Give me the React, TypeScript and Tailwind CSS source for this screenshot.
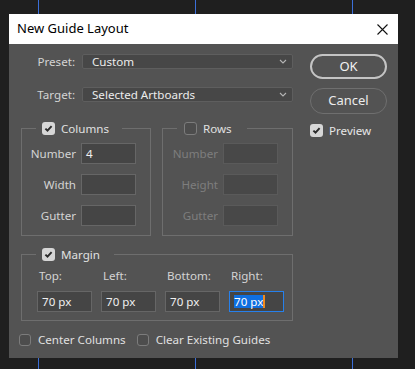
import React from "react"

const font = "font-['Noto_Sans','Open_Sans',sans-serif]"

function Check({ checked = false, small = false }: { checked?: boolean; small?: boolean }) {
  return (
    <span
      className={`flex items-center justify-center rounded-[3px] shrink-0 ${
        small ? "w-[12px] h-[12px]" : "w-[13px] h-[13px]"
      } ${checked ? "bg-[#d6d6d6]" : "border-[1.5px] border-[#7c7c7c] bg-[#4d4d4d]"}`}
    >
      {checked && (
        <svg width="9" height="9" viewBox="0 0 9 9">
          <path d="M1.4 4.6 L3.5 6.7 L7.6 2.1" stroke="#2a2a2a" strokeWidth="1.9" fill="none" />
        </svg>
      )}
    </span>
  )
}

function Select({ value }: { value: string }) {
  return (
    <div className="ml-[7px] w-[211px] h-[15px] flex items-center justify-between rounded-[2px] border border-[#5e5e5e] bg-[#474747] pl-[9px] pr-[5px]">
      <span className="text-[11.6px] leading-[15px] text-[#ececec]">{value}</span>
      <svg width="8" height="5" viewBox="0 0 8 5">
        <path d="M1 1 L4 4 L7 1" stroke="#b5b5b5" strokeWidth="1.1" fill="none" />
      </svg>
    </div>
  )
}

function Field({ value = "", disabled = false }: { value?: string; disabled?: boolean }) {
  return (
    <div
      className={`w-[55px] h-[21px] flex items-center pl-[4px] text-[11.6px] ${
        disabled ? "border border-[#5a5a5a] bg-[#484848]" : "border border-[#666666] bg-[#454545] text-[#f0f0f0]"
      }`}
    >
      {value}
    </div>
  )
}

function LabeledField({ label, value, disabled, labelWidth }: { label: string; value?: string; disabled?: boolean; labelWidth: string }) {
  return (
    <div className="flex items-center">
      <span className={`${labelWidth} text-right text-[11.6px] ${disabled ? "text-[#7e7e7e]" : "text-[#d4d4d4]"}`}>{label}</span>
      <div className="ml-[5px]">
        <Field value={value} disabled={disabled} />
      </div>
    </div>
  )
}

export default function App() {
  return (
    <div className={`relative w-[415px] h-[369px] overflow-hidden bg-[#1f1f1f] pt-[14px] pl-[9px] ${font}`}>
      {/* artboard guides */}
      <div className="absolute top-0 bottom-0 left-[38px] w-px bg-[#3b6fd9]" />
      <div className="absolute top-0 bottom-0 left-[195px] w-px bg-[#3b6fd9]" />
      <div className="absolute top-0 bottom-0 left-[352px] w-px bg-[#3b6fd9]" />

      <div className="relative z-10 w-[389px] h-[344px] flex flex-col">
        <div className="h-[30px] bg-white flex items-center justify-between pl-[8px] pr-[10px]">
          <span className="text-[13px] text-black">New Guide Layout</span>
          <svg width="11" height="11" viewBox="0 0 11 11">
            <path d="M0.5 0.5 L10.5 10.5 M10.5 0.5 L0.5 10.5" stroke="#111" strokeWidth="1.1" />
          </svg>
        </div>

        <div className="flex-1 bg-[#535353] flex pt-[10px] pl-[12px] pr-[11px]">
          {/* left column */}
          <div className="w-[272px] flex flex-col">
            <div className="flex items-center h-[15px]">
              <span className="w-[54px] text-right text-[11.6px] text-[#d4d4d4]">Preset:</span>
              <Select value="Custom" />
            </div>
            <div className="flex items-center h-[15px] mt-[18px]">
              <span className="w-[54px] text-right text-[11.6px] text-[#d4d4d4]">Target:</span>
              <Select value="Selected Artboards" />
            </div>

            <div className="flex gap-[11px] mt-[18px]">
              <fieldset className="w-[130px] border border-[#6e6e6e] pt-[6px] pb-[9px] flex flex-col gap-[10px]">
                <legend className="ml-[14px] pl-[6px] pr-[13px] h-[17px] flex items-center gap-[6px]">
                  <Check checked />
                  <span className="text-[11.6px] text-[#e0e0e0]">Columns</span>
                </legend>
                <LabeledField label="Number" value="4" labelWidth="w-[54px]" />
                <LabeledField label="Width" labelWidth="w-[54px]" />
                <LabeledField label="Gutter" labelWidth="w-[54px]" />
              </fieldset>
              <fieldset className="flex-1 border border-[#6e6e6e] pt-[6px] pb-[9px] flex flex-col gap-[10px]">
                <legend className="ml-[14px] pl-[7px] pr-[15px] h-[17px] flex items-center gap-[6px]">
                  <Check />
                  <span className="text-[11.6px] text-[#e0e0e0]">Rows</span>
                </legend>
                <LabeledField label="Number" disabled labelWidth="w-[55px]" />
                <LabeledField label="Height" disabled labelWidth="w-[55px]" />
                <LabeledField label="Gutter" disabled labelWidth="w-[55px]" />
              </fieldset>
            </div>

            <fieldset className="mt-[10px] border border-[#6e6e6e] pt-[5px] pb-[8px] pl-[15px]">
              <legend className="-ml-px pl-[6px] pr-[14px] h-[17px] flex items-center gap-[6px]">
                <Check checked />
                <span className="text-[11.6px] text-[#e0e0e0]">Margin</span>
              </legend>
              <div className="grid grid-cols-[55px_55px_55px_55px] gap-x-[9px] gap-y-[7px]">
                {["Top:", "Left:", "Bottom:", "Right:"].map((l) => (
                  <span key={l} className="pl-[2px] h-[16px] leading-[16px] text-[11.6px] text-[#d4d4d4]">
                    {l}
                  </span>
                ))}
                <Field value="70 px" />
                <Field value="70 px" />
                <Field value="70 px" />
                <div className="w-[55px] h-[21px] flex items-center pl-[4px] border border-[#2680eb] bg-[#454545] text-[11.6px]">
                  <span className="bg-[#0f6fe0] text-white leading-[13px]">70 px</span>
                  <span className="w-[2px] h-[13px] bg-[#f08a1c]" />
                </div>
              </div>
            </fieldset>

            <div className="flex items-center h-[16px] mt-[11px] -ml-[2px]">
              <Check small />
              <span className="ml-[7px] text-[11.6px] text-[#e0e0e0]">Center Columns</span>
              <span className="ml-[11px]">
                <Check small />
              </span>
              <span className="ml-[7px] text-[11.6px] text-[#e0e0e0]">Clear Existing Guides</span>
            </div>
          </div>

          {/* right column */}
          <div className="w-[77px] ml-[17px] flex flex-col">
            <button className="h-[25px] rounded-full border-2 border-[#c4c4c4] text-[13px] text-[#f2f2f2]">OK</button>
            <button className="h-[26px] mt-[9px] rounded-full border-[1.5px] border-[#6f6f6f] text-[13px] text-[#ececec]">Cancel</button>
            <div className="flex items-center h-[17px] mt-[8px] gap-[6px]">
              <Check checked />
              <span className="text-[11.6px] text-[#e6e6e6]">Preview</span>
            </div>
          </div>
        </div>
      </div>
    </div>
  )
}
